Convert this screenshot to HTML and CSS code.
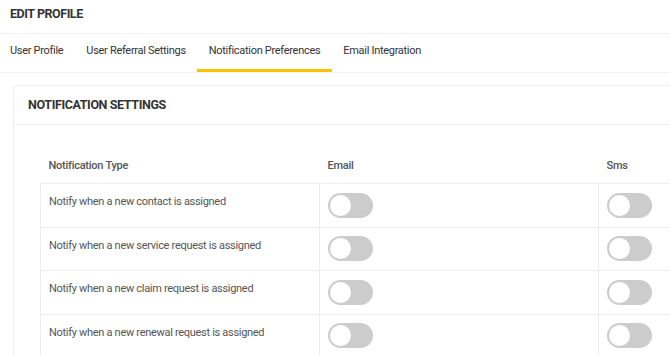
FILE: index.html
```html
<!DOCTYPE html>
<html lang="en">
<head>
  <meta charset="UTF-8">
  <meta name="viewport" content="width=device-width, initial-scale=1.0">
  <title>Edit Profile</title>
  <link rel="stylesheet" href="styles.css">
</head>
<body>
  <div class="page-title">EDIT PROFILE</div>
  <div class="tabs">
    <a class="tab">User Profile</a>
    <a class="tab">User Referral Settings</a>
    <a class="tab active">Notification Preferences</a>
    <a class="tab">Email Integration</a>
  </div>

  <div class="card">
    <div class="card-header">NOTIFICATION SETTINGS</div>
    <div class="card-body">
      <table class="settings">
        <thead>
          <tr>
            <th>Notification Type</th>
            <th>Email</th>
            <th>Sms</th>
          </tr>
        </thead>
        <tbody>
          <tr>
            <td>Notify when a new contact is assigned</td>
            <td class="toggle-cell"><label class="switch"><input type="checkbox"><span class="slider"></span></label></td>
            <td class="toggle-cell"><label class="switch"><input type="checkbox"><span class="slider"></span></label></td>
          </tr>
          <tr>
            <td>Notify when a new service request is assigned</td>
            <td class="toggle-cell"><label class="switch"><input type="checkbox"><span class="slider"></span></label></td>
            <td class="toggle-cell"><label class="switch"><input type="checkbox"><span class="slider"></span></label></td>
          </tr>
          <tr>
            <td>Notify when a new claim request is assigned</td>
            <td class="toggle-cell"><label class="switch"><input type="checkbox"><span class="slider"></span></label></td>
            <td class="toggle-cell"><label class="switch"><input type="checkbox"><span class="slider"></span></label></td>
          </tr>
          <tr>
            <td>Notify when a new renewal request is assigned</td>
            <td class="toggle-cell"><label class="switch"><input type="checkbox"><span class="slider"></span></label></td>
            <td class="toggle-cell"><label class="switch"><input type="checkbox"><span class="slider"></span></label></td>
          </tr>
        </tbody>
      </table>
    </div>
  </div>
</body>
</html>
```

FILE: styles.css
```css
html, body {
  overflow: hidden;
}
body {
  margin: 0;
  font-family: Roboto, 'Liberation Sans', sans-serif;
  background-color: #ffffff;
  color: #333;
}
.page-title {
  height: 33px;
  line-height: 28px;
  padding: 0 10px;
  font-size: 12.5px;
  letter-spacing: -0.45px;
  font-weight: 700;
  color: #333;
  border-bottom: 1px solid #f3f3f3;
}
.tabs {
  display: flex;
  margin: 0 0 0 -1.5px;
  border-bottom: 1px solid #f1f1f1;
}
.tab {
  display: block;
  padding: 0 11.5px;
  height: 35px;
  line-height: 34px;
  font-size: 11px;
  letter-spacing: -0.3px;
  color: #333;
  border-bottom: 3px solid transparent;
  cursor: pointer;
}
.tab.active {
  border-bottom-color: #f7c600;
}
.card {
  margin: 12px 0 0 13px;
  width: 920px;
  border: 1px solid #f1f1f1;
  border-radius: 4px;
}
.card-header {
  height: 38px;
  line-height: 38px;
  padding: 0 14px;
  font-size: 12.5px;
  letter-spacing: -0.38px;
  font-weight: 700;
  color: #333;
  border-bottom: 1px solid #f1f1f1;
}
.card-body {
  padding: 21px 26px;
}
.settings {
  border-collapse: collapse;
  table-layout: fixed;
  width: 838px;
  font-size: 11px;
  letter-spacing: -0.3px;
  color: #555;
}
.settings th {
  text-align: left;
  font-weight: 500;
  letter-spacing: -0.25px;
  padding: 11px 8px 9px;
  line-height: 17px;
  border: none;
}
.settings td {
  vertical-align: top;
  padding: 9px 8px 8px;
  line-height: 17px;
  border: 1px solid #eeeeee;
}
.settings td.toggle-cell {
  padding: 8.5px 8px 9px;
}
.switch {
  position: relative;
  display: block;
  width: 45px;
  height: 25px;
}
.switch input {
  opacity: 0;
  width: 0;
  height: 0;
}
.slider {
  position: absolute;
  inset: 0;
  background-color: #cccccc;
  border-radius: 13px;
  cursor: pointer;
}
.slider::before {
  content: "";
  position: absolute;
  left: 2px;
  top: 2px;
  width: 21px;
  height: 21px;
  border-radius: 50%;
  background-color: #fff;
}
```
